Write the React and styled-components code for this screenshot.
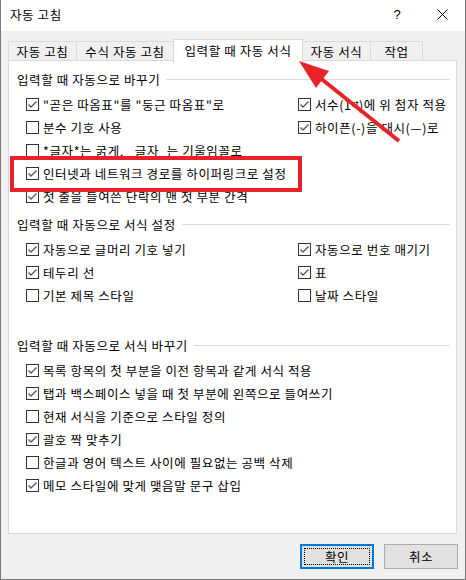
import React from "react";
import styled, { createGlobalStyle } from "styled-components";

const Global = createGlobalStyle`
  html, body { margin: 0; padding: 0; background: #fff; }
  body { font-family: "Noto Sans CJK KR", "Noto Sans", sans-serif; }
`;

const Window = styled.div`
  position: relative;
  width: 466px;
  height: 580px;
  box-sizing: border-box;
  border: 1px solid #7a7a7a;
  border-top: none;
  display: flex;
  flex-direction: column;
  background: #f0f0f0;
  font-family: "Noto Sans CJK KR", "Noto Sans", sans-serif;
  font-size: 12.5px;
  letter-spacing: 0.6px;
  color: #000;
  overflow: hidden;
`;

const TitleBar = styled.div`
  height: 31px;
  flex: none;
  background: #fff;
  display: flex;
  align-items: center;
  padding-left: 9px;
  padding-bottom: 2px;
  box-sizing: border-box;
`;

const Title = styled.div`
  flex: 1;
`;

const TitleBtn = styled.div`
  width: 45px;
  height: 29px;
  display: flex;
  align-items: center;
  justify-content: center;
  font-size: 13px;
  font-family: "Liberation Sans", sans-serif;
`;

const TabRow = styled.div`
  display: flex;
  align-items: flex-end;
  height: 22px;
  margin-top: 8px;
  padding-left: 7px;
  position: relative;
  z-index: 2;
`;

const Tab = styled.div`
  height: ${(p) => (p.$active ? 24 : 20)}px;
  width: ${(p) => p.$w}px;
  margin-bottom: ${(p) => (p.$active ? -2 : 0)}px;
  margin-left: -1px;
  box-sizing: border-box;
  border: 1px solid #d9d9d9;
  border-bottom: ${(p) => (p.$active ? "none" : "1px solid #d9d9d9")};
  background: ${(p) => (p.$active ? "#fff" : "#f0f0f0")};
  display: flex;
  align-items: center;
  justify-content: center;
  padding-bottom: ${(p) => (p.$active ? 3 : 0)}px;
  white-space: nowrap;
  &:first-child { margin-left: 0; }
`;

const Panel = styled.div`
  margin: -1px 8px 0 7px;
  height: 474px;
  box-sizing: border-box;
  border: 1px solid #d9d9d9;
  background: #fff;
  padding: 10px 6px 0 8px;
  position: relative;
  z-index: 1;
`;

const Section = styled.div`
  margin-top: ${(p) => p.$mt || 0}px;
`;

const Header = styled.div`
  display: flex;
  align-items: center;
  height: 16px;
  margin-bottom: 6px;
  white-space: nowrap;
  &::after {
    content: "";
    flex: 1;
    height: 1px;
    background: #dcdcdc;
    margin-left: 6px;
  }
`;

const Grid = styled.div`
  display: grid;
  grid-template-columns: 272px 1fr;
  grid-auto-rows: 23px;
  padding-left: 9px;
`;

const Row = styled.label`
  display: flex;
  align-items: center;
  gap: 4px;
  white-space: nowrap;
  grid-column: ${(p) => p.$col || "auto"};
  grid-row: ${(p) => p.$row || "auto"};
`;

const Box = styled.span`
  width: 13px;
  height: 13px;
  box-sizing: border-box;
  border: 1px solid #333;
  background: #fff;
  flex: none;
  display: flex;
  align-items: center;
  justify-content: center;
`;

const Sup = styled.span`
  font-size: 9px;
  vertical-align: 3px;
  letter-spacing: 0;
`;

const Footer = styled.div`
  display: flex;
  justify-content: flex-end;
  gap: 10px;
  padding: 10px 7px 0 0;
`;

const Button = styled.div`
  width: 74px;
  height: 25px;
  box-sizing: border-box;
  background: #e1e1e1;
  border: ${(p) => (p.$primary ? "2px solid #0078d7" : "1px solid #adadad")};
  display: flex;
  align-items: center;
  justify-content: center;
  padding: ${(p) => (p.$primary ? "2px" : "0")};
`;

const Focus = styled.div`
  width: 100%;
  height: 100%;
  box-sizing: border-box;
  border: 1px dotted #000;
  display: flex;
  align-items: center;
  justify-content: center;
`;

const Highlight = styled.div`
  position: absolute;
  left: 9px;
  top: 156px;
  width: 292px;
  height: 36px;
  box-sizing: border-box;
  border: 4px solid #e8202a;
  z-index: 5;
  pointer-events: none;
`;

const ArrowSvg = styled.svg`
  position: absolute;
  left: 0;
  top: 0;
  z-index: 6;
  pointer-events: none;
`;

function Check({ on, children, col, row }) {
  return (
    <Row $col={col} $row={row}>
      <Box>
        {on && (
          <svg width="11" height="11" viewBox="0 0 11 11">
            <polyline points="1.5,5.5 4,8 9.5,2.5" fill="none" stroke="#555" strokeWidth="1.3" />
          </svg>
        )}
      </Box>
      <span>{children}</span>
    </Row>
  );
}

export default function App() {
  return (
    <>
      <Global />
      <Window>
        <TitleBar>
          <Title>자동 고침</Title>
          <TitleBtn>?</TitleBtn>
          <TitleBtn>
            <svg width="11" height="11" viewBox="0 0 11 11">
              <path d="M0.5 0.5 L10.5 10.5 M10.5 0.5 L0.5 10.5" stroke="#000" strokeWidth="1" />
            </svg>
          </TitleBtn>
        </TitleBar>
        <TabRow>
          <Tab $w={69}>자동 고침</Tab>
          <Tab $w={98}>수식 자동 고침</Tab>
          <Tab $w={130} $active>입력할 때 자동 서식</Tab>
          <Tab $w={69}>자동 서식</Tab>
          <Tab $w={53}>작업</Tab>
        </TabRow>
        <Panel>
          <Section>
            <Header>입력할 때 자동으로 바꾸기</Header>
            <Grid>
              <Check on col="1" row="1">"곧은 따옴표"를 "둥근 따옴표"로</Check>
              <Check col="1" row="2">분수 기호 사용</Check>
              <Check col="1" row="3">*글자*는 굵게, _글자_는 기울임꼴로</Check>
              <Check on col="1" row="4">인터넷과 네트워크 경로를 하이퍼링크로 설정</Check>
              <Check on col="1" row="5">첫 줄을 들여쓴 단락의 맨 첫 부분 간격</Check>
              <Check on col="2" row="1">서수(1<Sup>st</Sup>)에 위 첨자 적용</Check>
              <Check on col="2" row="2">하이픈(-)을 대시(—)로</Check>
            </Grid>
          </Section>
          <Section $mt={8}>
            <Header>입력할 때 자동으로 서식 설정</Header>
            <Grid>
              <Check on col="1" row="1">자동으로 글머리 기호 넣기</Check>
              <Check on col="1" row="2">테두리 선</Check>
              <Check col="1" row="3">기본 제목 스타일</Check>
              <Check on col="2" row="1">자동으로 번호 매기기</Check>
              <Check on col="2" row="2">표</Check>
              <Check col="2" row="3">날짜 스타일</Check>
            </Grid>
          </Section>
          <Section $mt={30}>
            <Header>입력할 때 자동으로 서식 바꾸기</Header>
            <Grid>
              <Check on col="1 / 3">목록 항목의 첫 부분을 이전 항목과 같게 서식 적용</Check>
              <Check on col="1 / 3">탭과 백스페이스 넣을 때 첫 부분에 왼쪽으로 들여쓰기</Check>
              <Check col="1 / 3">현재 서식을 기준으로 스타일 정의</Check>
              <Check on col="1 / 3">괄호 짝 맞추기</Check>
              <Check col="1 / 3">한글과 영어 텍스트 사이에 필요없는 공백 삭제</Check>
              <Check on col="1 / 3">메모 스타일에 맞게 맺음말 문구 삽입</Check>
            </Grid>
          </Section>
        </Panel>
        <Footer>
          <Button $primary>
            <Focus>확인</Focus>
          </Button>
          <Button>취소</Button>
        </Footer>
        <Highlight />
        <ArrowSvg width="466" height="580" viewBox="0 0 466 580">
          <line x1="398" y1="141" x2="318" y2="77" stroke="#e8232a" strokeWidth="4" />
          <polygon points="298,61 328,71 315,88" fill="#e8232a" />
        </ArrowSvg>
      </Window>
    </>
  );
}
